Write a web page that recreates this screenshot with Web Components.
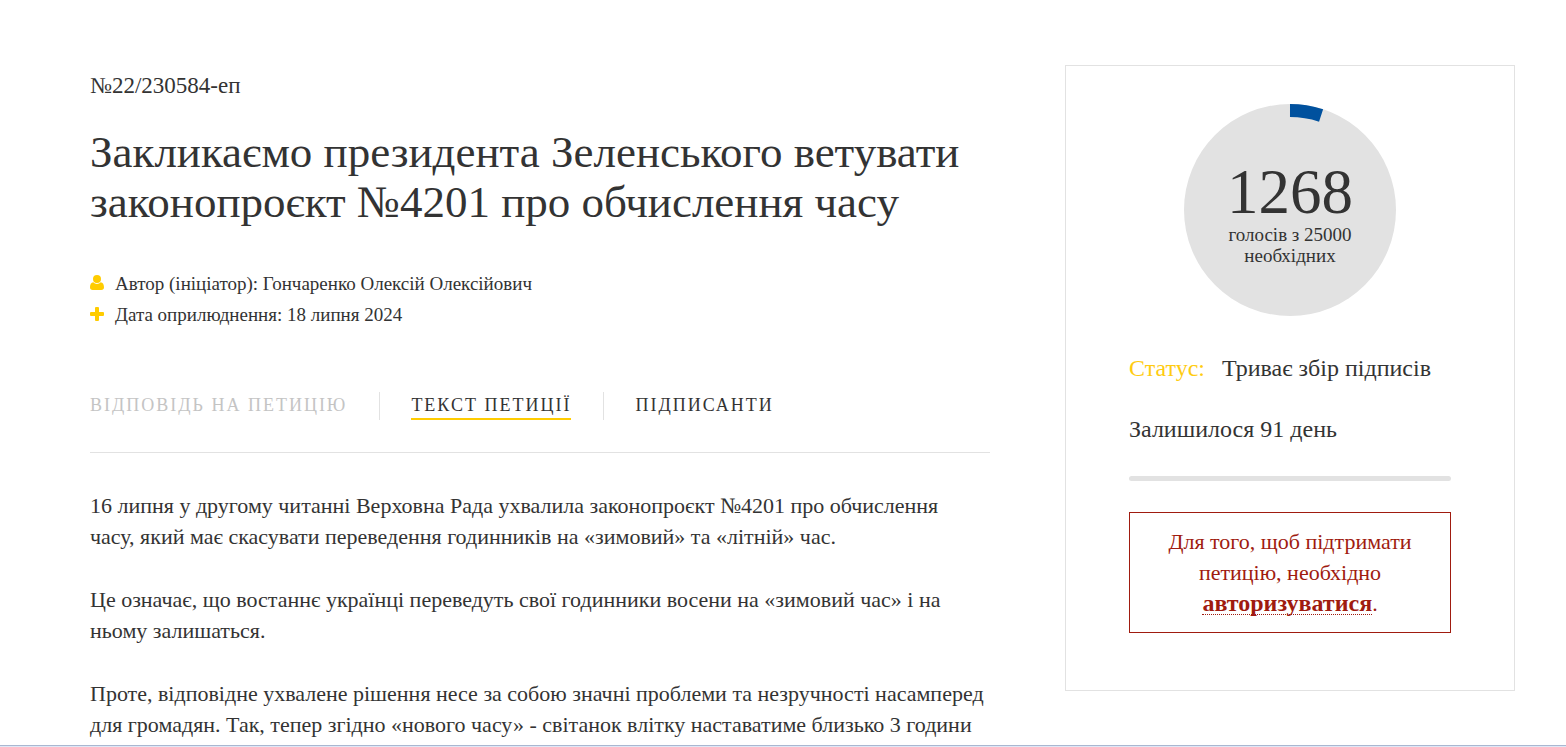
<!DOCTYPE html>
<html lang="uk">
<head>
<meta charset="utf-8">
<meta name="viewport" content="width=device-width, initial-scale=1">
<title>Закликаємо президента Зеленського ветувати законопроєкт №4201 про обчислення часу</title>
<style>
  body { margin: 0; background: #fff; color: #333; font-family: "Liberation Serif", serif; font-size: 20px; line-height: 31px; }
</style>
</head>
<body>
<petition-page>
  <petition-article slot="article" number="№22/230584-еп">
    <span slot="title">Закликаємо президента Зеленського ветувати<br>законопроєкт №4201 про обчислення часу</span>
    <petition-meta slot="meta" icon="user">Автор (ініціатор): Гончаренко Олексій Олексійович</petition-meta>
    <petition-meta slot="meta" icon="plus">Дата оприлюднення: 18 липня 2024</petition-meta>
    <petition-tab slot="tabs" disabled>Відповідь на петицію</petition-tab>
    <petition-tab slot="tabs" active>Текст петиції</petition-tab>
    <petition-tab slot="tabs">Підписанти</petition-tab>
    <petition-text>16 липня у другому читанні Верховна Рада ухвалила законопроєкт №4201 про обчислення<br>часу, який має скасувати переведення годинників на «зимовий» та «літній» час.</petition-text>
    <petition-text>Це означає, що востаннє українці переведуть свої годинники восени на «зимовий час» і на<br>ньому залишаться.</petition-text>
    <petition-text>Проте, відповідне ухвалене рішення несе за собою значні проблеми та незручності насамперед<br>для громадян. Так, тепер згідно «нового часу» - світанок влітку наставатиме близько 3 години</petition-text>
  </petition-article>
  <petition-status slot="aside">
    <vote-counter slot="counter" votes="1268" goal="25000"></vote-counter>
    <span slot="status">Триває збір підписів</span>
    <span slot="remaining">Залишилося 91 день</span>
    <auth-notice></auth-notice>
  </petition-status>
</petition-page>

<script>
const define = (name, html, setup) => {
  const template = document.createElement('template');
  template.innerHTML = html;
  customElements.define(name, class extends HTMLElement {
    constructor() {
      super();
      this.attachShadow({ mode: 'open' }).append(template.content.cloneNode(true));
    }
    connectedCallback() { if (setup) setup(this, this.shadowRoot); }
  });
};

define('petition-page', `
  <style>
    :host { display: flex; flex-direction: column; min-height: 100vh; }
    main { display: flex; align-items: flex-start; gap: 75px; padding: 65px 51px 0 90px; }
    .article { flex: 1; min-width: 0; }
    aside { flex: 0 0 450px; }
    footer { margin-top: auto; height: 1px; border-top: 1px solid #a9b7d1; background: #dfe8f6; }
    @media (max-width: 1100px) { main { flex-direction: column; padding: 32px; gap: 32px; } aside { flex: none; } }
  </style>
  <main>
    <div class="article"><slot name="article"></slot></div>
    <aside><slot name="aside"></slot></aside>
  </main>
  <footer></footer>`);

define('petition-article', `
  <style>
    :host { display: block; }
    .number { margin: 5px 0 26px; font-size: 23px; }
    h1 { margin: 0 0 41px; font-size: 45px; line-height: 50px; font-weight: 400; }
    nav { display: flex; margin-top: 62px; padding-bottom: 32px; border-bottom: 1px solid #e2e2e2; }
    .text { display: grid; gap: 32px; padding-top: 37px; }
  </style>
  <article>
    <p class="number"></p>
    <h1><slot name="title"></slot></h1>
    <slot name="meta"></slot>
    <nav aria-label="Розділи петиції"><slot name="tabs"></slot></nav>
    <div class="text"><slot></slot></div>
  </article>`, (host, root) => {
    root.querySelector('.number').textContent = host.getAttribute('number');
  });

define('petition-meta', `
  <style>
    :host { display: flex; align-items: center; gap: 11px; font-size: 19px; }
    svg { width: 14px; height: 18px; fill: #fc0; }
    svg path { display: none; }
    :host([icon=user]) .user, :host([icon=plus]) .plus { display: block; }
  </style>
  <svg viewBox="0 0 14 18" aria-hidden="true">
    <path class="user" d="M7 0a4 4 0 0 1 4 4 4 4 0 0 1-8 0 4 4 0 0 1 4-4ZM3.400 7.200C4.300 8.300 5.600 8.900 7 8.900s2.700-.6 3.600-1.700C13 7.300 14 9.700 14 12.300 14 14 13 15 11.300 15H2.700C1 15 0 14 0 12.300 0 9.700 1 7.300 3.400 7.200Z"/>
    <path class="plus" d="M6 1h2q1 0 1 1V6h4q1 0 1 1V9q0 1-1 1H9v4q0 1-1 1H6q-1 0-1-1V10H1Q0 10 0 9V7Q0 6 1 6H5V2Q5 1 6 1Z"/>
  </svg>
  <span><slot></slot></span>`);

define('petition-tab', `
  <style>
    :host { display: flex; }
    :host(:not(:first-of-type)) { margin-left: 32px; padding-left: 31px; border-left: 1px solid #e2e2e2; }
    button { height: 28px; margin: 0; padding: 0; border: 0; border-bottom: 2px solid transparent; background: none;
      color: #333; font: 18px/26px "Liberation Serif", serif; letter-spacing: 2px; text-transform: uppercase; cursor: pointer; }
    :host([active]) button { border-bottom-color: #fc0; }
    button:disabled { color: #c4c4c4; cursor: default; }
  </style>
  <button type="button"><slot></slot></button>`, (host, root) => {
    root.querySelector('button').disabled = host.hasAttribute('disabled');
  });

define('petition-text', `
  <style>:host { display: block; font-size: 22px; } p { margin: 0; }</style>
  <p><slot></slot></p>`);

define('petition-status', `
  <style>
    :host { display: block; padding: 38px 63px 57px; border: 1px solid #e2e2e2; font-size: 24px; line-height: 30px; }
    p { margin: 0 0 31px; }
    .status { display: flex; gap: 17px; margin-top: 37px; }
    .label { color: #fc1; }
    progress { display: block; appearance: none; width: 100%; height: 5px; margin: 32px 0 31px; border: 0; border-radius: 3px; overflow: hidden; background: #e2e2e2; }
    progress::-webkit-progress-bar { background: #e2e2e2; }
    progress::-webkit-progress-value { background: #00519e; }
  </style>
  <slot name="counter"></slot>
  <p class="status"><span class="label">Статус:</span><slot name="status"></slot></p>
  <p><slot name="remaining"></slot></p>
  <progress value="0" max="92" aria-label="Минуло днів"></progress>
  <slot></slot>`);

define('vote-counter', `
  <style>
    :host { display: grid; width: 212px; height: 212px; margin: 0 auto; }
    svg, .label { grid-area: 1 / 1; }
    svg { width: 100%; height: 100%; }
    .arc { fill: none; stroke: #00519e; stroke-width: 13; }
    .label { align-self: center; padding-top: 5px; text-align: center; font-size: 19px; line-height: 21px; }
    .votes { display: block; font-size: 63px; line-height: 64px; }
  </style>
  <svg viewBox="0 0 212 212" aria-hidden="true">
    <circle cx="106" cy="106" r="106" fill="#e2e2e2"/>
    <circle class="arc" cx="106" cy="106" r="99.5" pathLength="100" transform="rotate(-90 106 106)"/>
  </svg>
  <div class="label"><span class="votes"></span>голосів з <span class="goal"></span><br>необхідних</div>`, (host, root) => {
    const votes = Number(host.getAttribute('votes'));
    const goal = Number(host.getAttribute('goal'));
    root.querySelector('.votes').textContent = votes;
    root.querySelector('.goal').textContent = goal;
    root.querySelector('.arc').style.strokeDasharray = (votes / goal * 100) + ' 100';
  });

define('auth-notice', `
  <style>
    :host { display: block; padding: 13px 24px; border: 1px solid #a01b0f; color: #a01b0f; font-size: 22px; line-height: 31px; text-align: center; }
    p { margin: 0; }
    a { color: inherit; font-size: 24px; font-weight: 700; text-decoration: none; display: inline-block; line-height: 21px; border-bottom: 1px dotted #a01b0f; }
  </style>
  <p>Для того, щоб підтримати<br>петицію, необхідно<br><a href="#login">авторизуватися</a>.</p>`);
</script>
</body>
</html>
